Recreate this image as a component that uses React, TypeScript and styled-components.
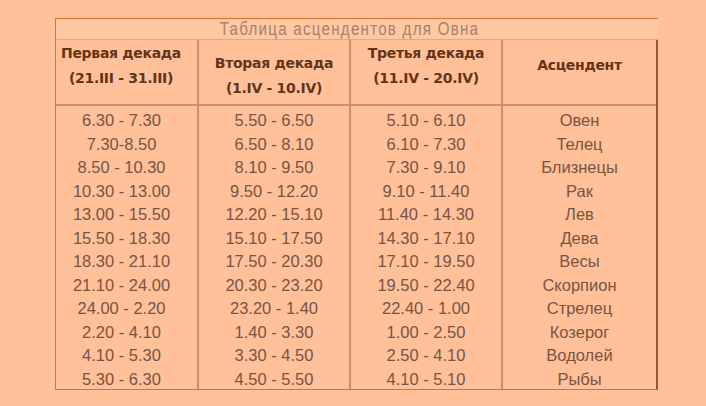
import React from "react";
import styled, { createGlobalStyle } from "styled-components";

const Global = createGlobalStyle`
  html, body { margin: 0; padding: 0; background: #ffc09a; }
  body { width: 706px; height: 406px; overflow: hidden; font-family: "Liberation Sans", Arial, sans-serif; }
`;

const Page = styled.div`
  width: 706px;
  height: 406px;
  padding: 18px 0 0 55px;
  box-sizing: border-box;
  background: #ffc09a;
`;

const Table = styled.div`
  width: 603px;
  border-top: 1.5px solid #d8732f;
  border-left: 1px solid #d8732f;
  border-bottom: 1.5px solid #d8732f;
  box-sizing: border-box;
`;

const Caption = styled.div`
  height: 20px;
  padding-right: 16px;
  background: #ffc8a3;
  border-bottom: 1px solid rgba(190, 130, 95, 0.45);
  text-align: center;
  overflow: hidden;
`;

const CaptionText = styled.span`
  display: inline-block;
  font-family: "Liberation Sans", Arial, sans-serif;
  font-size: 18px;
  line-height: 20px;
  letter-spacing: 1.5px;
  color: #a8826b;
  white-space: nowrap;
  transform: scaleX(0.84);
  transform-origin: center;
`;

const Grid = styled.div`
  display: grid;
  grid-template-columns: 143px 152px 152px 153px;
  border-right: 2px solid #8d5b3b;
  width: 600px;
`;

const HeadCell = styled.div<{ $offset: number; $last?: boolean; $shift?: number }>`
  height: 66px;
  box-sizing: border-box;
  padding-top: ${(p) => p.$offset}px;
  padding-right: ${(p) => p.$shift ?? 0}px;
  border-right: ${(p) => (p.$last ? "none" : "2px solid rgba(165, 100, 65, 0.55)")};
  border-bottom: 2px solid rgba(165, 100, 65, 0.55);
  text-align: center;
  font-family: "DejaVu Sans", Verdana, sans-serif;
  font-weight: bold;
  font-size: 14px;
  line-height: 25px;
  color: #643418;
  letter-spacing: -0.3px;
  white-space: nowrap;
`;

const BodyCell = styled.div<{ $last?: boolean; $shift?: number }>`
  display: flex;
  flex-direction: column;
  align-items: center;
  padding-top: 3px;
  padding-right: ${(p) => p.$shift ?? 0}px;
  height: 283px;
  box-sizing: border-box;
  border-right: ${(p) => (p.$last ? "none" : "2px solid rgba(165, 100, 65, 0.55)")};
`;

const Line = styled.div`
  height: 23.5px;
  line-height: 23.5px;
  font-size: 16.5px;
  color: #7a5443;
  white-space: nowrap;
`;

const col1 = ["6.30 - 7.30", "7.30-8.50", "8.50 - 10.30", "10.30 - 13.00", "13.00 - 15.50", "15.50 - 18.30", "18.30 - 21.10", "21.10 - 24.00", "24.00 - 2.20", "2.20 - 4.10", "4.10 - 5.30", "5.30 - 6.30"];
const col2 = ["5.50 - 6.50", "6.50 - 8.10", "8.10 - 9.50", "9.50 - 12.20", "12.20 - 15.10", "15.10 - 17.50", "17.50 - 20.30", "20.30 - 23.20", "23.20 - 1.40", "1.40 - 3.30", "3.30 - 4.50", "4.50 - 5.50"];
const col3 = ["5.10 - 6.10", "6.10 - 7.30", "7.30 - 9.10", "9.10 - 11.40", "11.40 - 14.30", "14.30 - 17.10", "17.10 - 19.50", "19.50 - 22.40", "22.40 - 1.00", "1.00 - 2.50", "2.50 - 4.10", "4.10 - 5.10"];
const col4 = ["Овен", "Телец", "Близнецы", "Рак", "Лев", "Дева", "Весы", "Скорпион", "Стрелец", "Козерог", "Водолей", "Рыбы"];

export default function App() {
  return (
    <>
      <Global />
      <Page>
        <Table>
          <Caption>
            <CaptionText>Таблица асцендентов для Овна</CaptionText>
          </Caption>
          <Grid>
            <HeadCell $offset={1} $shift={11}>
              Первая декада
              <br />
              (21.III - 31.III)
            </HeadCell>
            <HeadCell $offset={11}>
              Вторая декада
              <br />
              (1.IV - 10.IV)
            </HeadCell>
            <HeadCell $offset={1}>
              Третья декада
              <br />
              (11.IV - 20.IV)
            </HeadCell>
            <HeadCell $offset={13} $last>
              Асцендент
            </HeadCell>
            <BodyCell $shift={10}>
              {col1.map((t) => (
                <Line key={t}>{t}</Line>
              ))}
            </BodyCell>
            <BodyCell>
              {col2.map((t) => (
                <Line key={t}>{t}</Line>
              ))}
            </BodyCell>
            <BodyCell>
              {col3.map((t) => (
                <Line key={t}>{t}</Line>
              ))}
            </BodyCell>
            <BodyCell $last>
              {col4.map((t) => (
                <Line key={t}>{t}</Line>
              ))}
            </BodyCell>
          </Grid>
        </Table>
      </Page>
    </>
  );
}
